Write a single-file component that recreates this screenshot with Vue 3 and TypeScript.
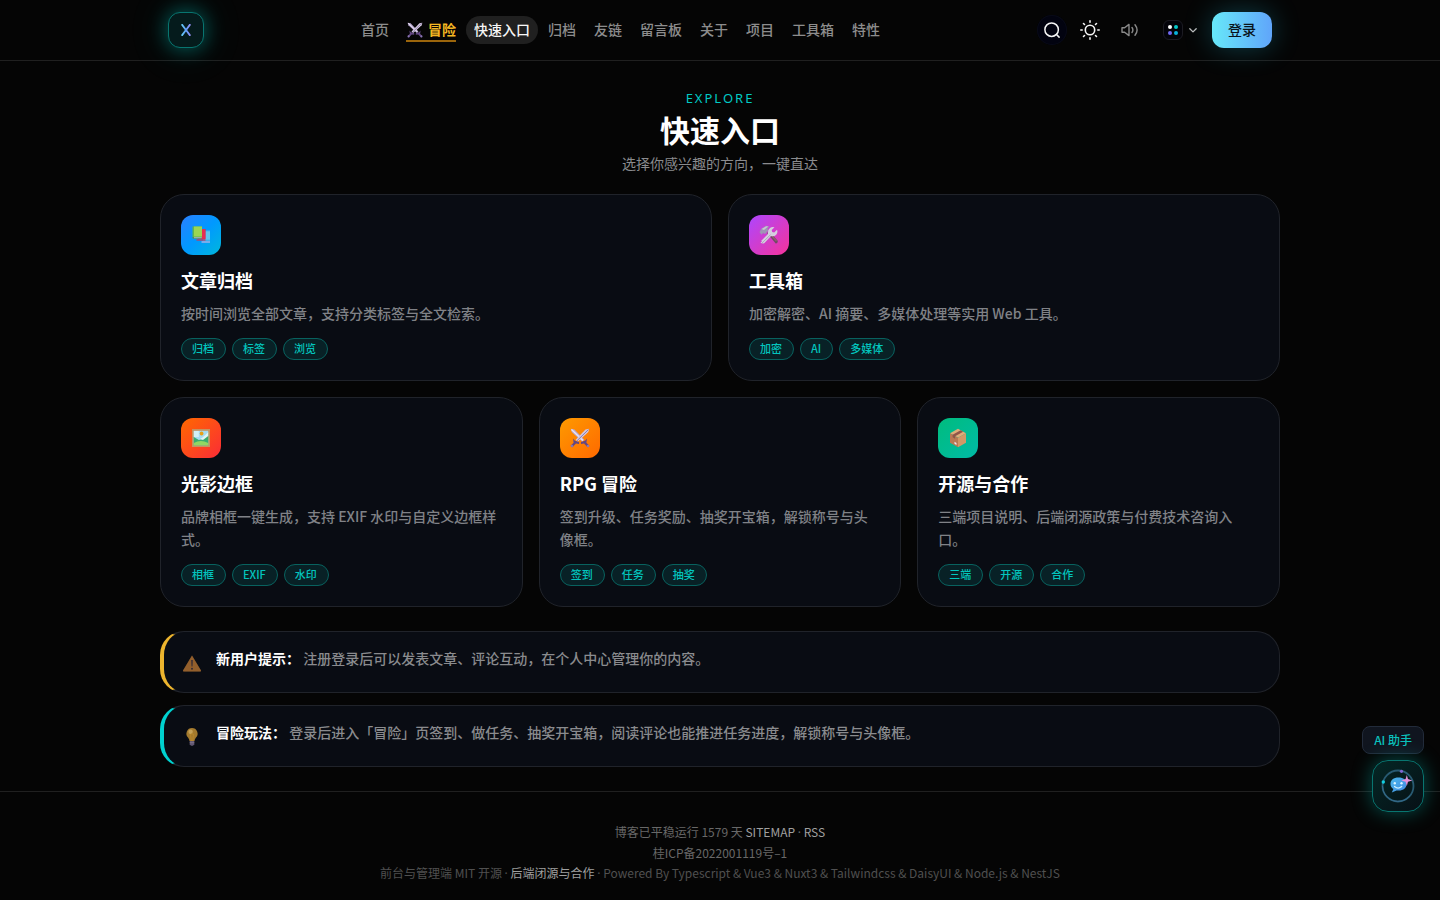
<script setup lang="ts">
type IconName = 'books' | 'tools' | 'frame' | 'swords' | 'box'

interface Entry {
  icon: IconName
  title: string
  desc: string
  tags: string[]
  wide: boolean
}

const navBefore: string[] = ['首页']
const navAfter: string[] = ['归档', '友链', '留言板', '关于', '项目', '工具箱', '特性']

const entries: Entry[] = [
  { icon: 'books', title: '文章归档', desc: '按时间浏览全部文章，支持分类标签与全文检索。', tags: ['归档', '标签', '浏览'], wide: true },
  { icon: 'tools', title: '工具箱', desc: '加密解密、AI 摘要、多媒体处理等实用 Web 工具。', tags: ['加密', 'AI', '多媒体'], wide: true },
  { icon: 'frame', title: '光影边框', desc: '品牌相框一键生成，支持 EXIF 水印与自定义边框样式。', tags: ['相框', 'EXIF', '水印'], wide: false },
  { icon: 'swords', title: 'RPG 冒险', desc: '签到升级、任务奖励、抽奖开宝箱，解锁称号与头像框。', tags: ['签到', '任务', '抽奖'], wide: false },
  { icon: 'box', title: '开源与合作', desc: '三端项目说明、后端闭源政策与付费技术咨询入口。', tags: ['三端', '开源', '合作'], wide: false },
]
</script>

<template>
  <div class="page">
    <header class="topbar">
      <div class="topbar-inner">
        <a class="logo" href="#" aria-label="X">
          <svg viewBox="0 0 12 12" width="12" height="12" fill="none" stroke-width="1.900">
            <defs>
              <linearGradient id="lx" x1="0" y1="0" x2="12" y2="0" gradientUnits="userSpaceOnUse">
                <stop offset="0.1" stop-color="#67d4f8" />
                <stop offset="0.5" stop-color="#609df8" />
                <stop offset="1" stop-color="#a78bfa" />
              </linearGradient>
            </defs>
            <path d="M1.700 .3 10.300 11.700M10.300 .3 1.700 11.700" stroke="url(#lx)" />
          </svg>
        </a>

        <nav class="nav">
          <a v-for="n in navBefore" :key="n" href="#" class="nav-link">{{ n }}</a>
          <a href="#" class="nav-link adventure">
            <svg class="nav-swords" viewBox="0 0 20 20" width="16" height="16"><use href="#swords" /></svg>
            <span>冒险</span>
          </a>
          <a href="#" class="nav-link active">快速入口</a>
          <a v-for="n in navAfter" :key="n" href="#" class="nav-link">{{ n }}</a>
        </nav>

        <div class="actions">
          <button class="round" type="button" aria-label="搜索">
            <svg viewBox="0 0 24 24" width="18" height="18" fill="none" stroke="#f5f5f5" stroke-width="2" stroke-linecap="round"><circle cx="11.500" cy="11.500" r="9" /><path d="m18 18 3.500 3.500" /></svg>
          </button>
          <button class="plain" type="button" aria-label="主题">
            <svg viewBox="0 0 20 20" width="20" height="20" fill="none" stroke="#f5f5f5" stroke-width="1.600" stroke-linecap="round"><circle cx="10" cy="10" r="4.700" /><path d="M10 .8v1.400M10 17.800v1.400M.8 10h1.400M17.800 10h1.400M3.500 3.500l1 1M15.500 15.500l1 1M3.500 16.500l1-1M15.500 4.500l1-1" /></svg>
          </button>
          <button class="plain sound" type="button" aria-label="声音">
            <svg viewBox="0 0 18 14" width="18" height="14" fill="none" stroke="#8a8a8a" stroke-width="1.400" stroke-linecap="round" stroke-linejoin="round"><path d="M1 4.800v4.400h2.600L8 12.600V1.400L3.600 4.800zM11 4.500q1.800 2.500 0 5M14 1.700q4.200 5.300 0 10.600" /></svg>
          </button>
          <button class="palette" type="button" aria-label="配色">
            <span class="swatch"><i></i><i></i><i></i><i></i></span>
            <svg viewBox="0 0 10 10" width="10" height="10" fill="none" stroke="#bcbcbc" stroke-width="1.300" stroke-linecap="round" stroke-linejoin="round"><path d="m1.800 3.700 3.200 3.200 3.200-3.200" /></svg>
          </button>
          <button class="login" type="button">登录</button>
        </div>
      </div>
    </header>

    <main class="main">
      <section class="hero">
        <p class="eyebrow">EXPLORE</p>
        <h1>快速入口</h1>
        <p class="sub">选择你感兴趣的方向，一键直达</p>
      </section>

      <section class="grid">
        <a v-for="e in entries" :key="e.title" href="#" class="card" :class="{ wide: e.wide }">
          <span class="tile" :class="e.icon">
            <svg viewBox="0 0 20 20" width="20" height="20"><use :href="'#' + e.icon" /></svg>
          </span>
          <h2>{{ e.title }}</h2>
          <p class="desc">{{ e.desc }}</p>
          <ul class="tags">
            <li v-for="t in e.tags" :key="t">{{ t }}</li>
          </ul>
        </a>
      </section>

      <section class="notices">
        <div class="notice warn">
          <svg viewBox="0 0 20 20" width="20" height="20"><path d="M10 2.500 19 17.500q.3 1-.8 1H1.800q-1.100 0-.8-1z" fill="#97692f" /><path d="M10 2.500 19 17.500q.3 1-.8 1H1.800q-1.100 0-.8-1z" fill="#8b4c28" opacity=".35" /><path d="M9.200 7h1.600l-.3 6.500h-1z" fill="#342b35" /><circle cx="10" cy="15.700" r="1" fill="#342b35" /></svg>
          <p><strong>新用户提示：</strong> 注册登录后可以发表文章、评论互动，在个人中心管理你的内容。</p>
        </div>
        <div class="notice tip">
          <svg viewBox="0 0 20 20" width="20" height="20"><path d="M10 1a5.600 5.600 0 0 1 4 9.500Q12.600 12 12.500 14h-5Q7.400 12 6 10.500A5.600 5.600 0 0 1 10 1" fill="#a47a2d" /><circle cx="8.600" cy="4.800" r="2.200" fill="#c5a157" /><path d="M8.500 7.500q1.500-1.500 3 0L10.700 14H9.300z" fill="none" stroke="#bc8929" stroke-width=".8" /><path d="M7.700 14h4.600v3.200L11 18.800H9l-1.300-1.600z" fill="#615771" /><path d="M7.700 15.700h4.600" stroke="#897d94" stroke-width=".7" /></svg>
          <p><strong>冒险玩法：</strong> 登录后进入「冒险」页签到、做任务、抽奖开宝箱，阅读评论也能推进任务进度，解锁称号与头像框。</p>
        </div>
      </section>
    </main>

    <footer class="footer">
      <p class="mid">博客已平稳运行 1579 天 <a href="#">SITEMAP</a> <span class="dot">·</span> <a href="#">RSS</a></p>
      <p class="mid">桂ICP备2022001119号–1</p>
      <p>前台与管理端 MIT 开源 <span class="dot">·</span> <a href="#">后端闭源与合作</a> <span class="dot">·</span> Powered By Typescript &amp; Vue3 &amp; Nuxt3 &amp; Tailwindcss &amp; DaisyUI &amp; Node.js &amp; NestJS</p>
    </footer>

    <aside class="assistant">
      <span class="assistant-label">AI 助手</span>
      <button class="assistant-btn" type="button" aria-label="AI 助手">
        <svg viewBox="0 0 36 36" width="36" height="36" fill="none">
          <defs>
            <linearGradient id="bub" x1="10" y1="9" x2="26" y2="24" gradientUnits="userSpaceOnUse"><stop stop-color="#4ab9ed" /><stop offset="1" stop-color="#438be0" /></linearGradient>
          </defs>
          <circle cx="18" cy="18" r="15.500" stroke="#285a72" stroke-width="1.800" />
          <path d="M2.500 18A15.500 15.500 0 0 0 30 27.800" stroke="#356b8b" stroke-width="1" />
          <path d="M18.500 9.500c5 0 8 2.500 8 6.400s-3 6.600-7.700 6.600h-2.300l-4.700 2 1.600-3.600c-2-1.200-2.900-2.900-2.900-5 0-3.900 3-6.400 8-6.400" fill="url(#bub)" />
          <circle cx="14.800" cy="15.300" r="1.200" fill="#d6f3ff" /><circle cx="21.500" cy="15.300" r="1.200" fill="#d6f3ff" />
          <path d="M14.500 18.500q3.600 3.200 7.200 0" stroke="#c9efff" stroke-width="1.200" stroke-linecap="round" />
          <path d="m26.800 7 1.200 4 4.300 1.400-4.300 1.400-1.200 4.200-1.200-4.200-4.300-1.400 4.300-1.400z" fill="#e391d8" />
          <circle cx="21.500" cy="3.300" r="1.600" fill="#8066d2" /><circle cx="3.300" cy="14" r="1.700" fill="#12cfe0" />
        </svg>
      </button>
    </aside>

    <svg class="sprites" aria-hidden="true">
      <symbol id="books" viewBox="0 0 20 20">
        <path d="M12 5.500h7v10.300h-7z" fill="#48b5ed" /><path d="M13 6.500h6v8h-6z" fill="#5fc7f0" />
        <path d="M10.500 16.400h8.500v1.200h-8.500z" fill="#c6b5e6" />
        <path d="M7 4h7.500v10H7z" fill="#cf2757" /><path d="M10.500 4h3.800v9.800h-3.800z" fill="#e62f52" /><path d="M5.500 14.200h9v1.500h-9z" fill="#b64267" />
        <path d="M1.500 1.500H11v10.800H1.500z" fill="#5eb552" /><path d="M3 1.500h8v10H3z" fill="#9bd653" /><path d="M1.500 12h9.300v1.800H2.500q-1 0-1-1z" fill="#4c9160" /><path d="M3 12.300h7.800v.9H3z" fill="#b9bad0" />
      </symbol>
      <symbol id="tools" viewBox="0 0 20 20">
        <path d="m8 8 2-2 8.700 9.700q.5 2.300-2 2.800z" fill="#714c64" /><path d="m10.500 9 1-1 6.500 7.500-1 1z" fill="#90616c" />
        <path d="m.5 7 2-3.500L7 .7l3.500.8-2 2 .7 2L6 9l-2-1-1.500 1.800z" fill="#9f94b5" /><path d="m2.700 4 4.500-2.800 2 .3L5 5z" fill="#cac4d4" />
        <path d="m2 16 7-7Q8.300 5 11 3q2-1.500 4.500-.7L12.700 5l.5 2 2 .5L18 4.700q1.200 3-.8 5-2 2.200-5.200 1.300L5.500 18q-2 1.300-4-.4l1.700-1.400z" fill="#d5cedf" /><path d="m3 18 8.500-8.300" stroke="#a79eb5" stroke-width=".8" />
      </symbol>
      <symbol id="frame" viewBox="0 0 20 20">
        <path d="M1 1h18v18H1z" fill="#c6945f" /><path d="M2.800 2.800h14.400v14.400H2.800z" fill="#a6dcf2" />
        <path d="M2.800 3h5v6h-5z" fill="#d1f1f5" /><circle cx="10.600" cy="5.500" r="1.900" fill="#e9a018" />
        <path d="m2.800 9 5 3 4-1 5.400-5.500v11.700H2.800z" fill="#38ad70" /><path d="m9 11 2.500-1.500 5.700-5.200V8L12 12z" fill="#e2f3f4" /><path d="M2.800 15q7-4 14.400 0v2.200H2.800z" fill="#91d762" />
      </symbol>
      <symbol id="swords" viewBox="0 0 20 20">
        <path d="m.8.8 3.700.8 9.800 10.200-2 2L1.700 4z" fill="#b9a9d2" /><path d="m1.500 1.500 11.500 11" stroke="#eee6f3" stroke-width="1.200" />
        <path d="m19.200.8-3.700.8-9.800 10.200 2 2L18.300 4z" fill="#d4c8e0" /><path d="M18.500 1.500 7 12.800" stroke="#8d7bab" />
        <path d="m3 10.500 2 2.200 4 1.300v2l-3-.5-3.700 3.800-1.700-1.600 3-3zM17 10.500l-2 2.200-4 1.300v2l3-.5 3.700 3.800 1.700-1.600-3-3z" fill="#634783" />
        <circle cx="2" cy="18" r="1.300" fill="#8875b3" /><circle cx="18" cy="18" r="1.300" fill="#8875b3" />
      </symbol>
      <symbol id="box" viewBox="0 0 20 20">
        <path d="m10 .8 8 4.400-8 4.600-8-4.600z" fill="#dfac79" /><path d="M2 5.200 10 9.800v9.400l-8-4.500z" fill="#b97954" /><path d="m18 5.200-8 4.600v9.400l8-4.500z" fill="#d39867" />
        <path d="m12.700 2.300 2.500 1.400-8.100 4.600v2.500L4.600 9.300V6.700z" fill="#8f5649" /><path d="m6.500 13.800 2 1.200v2l-2-1.200z" fill="#eee2ee" />
      </symbol>
    </svg>
  </div>
</template>

<style>
body {
  background: #050505;
}
</style>

<style scoped>
.page {
  display: flex;
  flex-direction: column;
  min-height: 100vh;
  background: #050505;
  color: #8a8b8e;
  font-family: "Noto Sans CJK SC", "Noto Sans", sans-serif;
  font-size: 14px;
  line-height: 23px;
}
h1, h2, p, ul { margin: 0; padding: 0; }
a { color: inherit; text-decoration: none; }
button { font: inherit; color: inherit; border: 0; padding: 0; background: none; cursor: pointer; }
svg { display: block; flex: none; }
.sprites { position: absolute; width: 0; height: 0; }

.topbar { border-bottom: 1px solid #202020; }
.topbar-inner {
  display: flex;
  align-items: center;
  justify-content: space-between;
  box-sizing: border-box;
  max-width: 1120px;
  height: 60px;
  margin: 0 auto;
  padding: 0 8px;
}
.logo {
  display: grid;
  place-items: center;
  box-sizing: border-box;
  width: 36px;
  height: 36px;
  border: 1px solid #087570;
  border-radius: 12px;
  background: #051b1c;
  box-shadow: 0 0 20px rgba(0, 213, 205, 0.42), 0 0 44px rgba(0, 213, 205, 0.16);
}
.nav { display: flex; align-items: center; gap: 2px; }
.nav-link {
  padding: 0 8px 2px;
  border-radius: 14px;
  color: #8d8d8d;
  font-weight: 500;
  line-height: 26px;
  white-space: nowrap;
}
.nav-link.active { background: #202020; color: #f7f7f7; }
.adventure { display: flex; align-items: center; gap: 5px; position: relative; color: #f5b722; font-weight: 700; }
.nav-swords { margin-top: 2px; }
.adventure::after {
  content: "";
  position: absolute;
  left: 7px;
  right: 8px;
  bottom: 2px;
  height: 2px;
  background: #9b650b;
}
.actions { display: flex; align-items: center; gap: 8px; }
.round, .plain { display: grid; place-items: center; width: 30px; height: 30px; border-radius: 50%; }
.round { background: #020310; box-shadow: 0 0 0 1px #080a17 inset; }
.sound { width: 34px; }
.palette { display: flex; align-items: center; gap: 5px; padding: 0 6px 0 8px; }
.swatch {
  display: grid;
  grid-template-columns: 4px 4px;
  gap: 2px;
  place-content: center;
  box-sizing: border-box;
  width: 20px;
  height: 20px;
  border: 1px solid #1b1b22;
  border-radius: 6px;
  background: #030309;
}
.swatch i { width: 4px; height: 4px; border-radius: 50%; background: #fff; }
.swatch i:nth-child(2) { background: #05c9c9; }
.swatch i:nth-child(3) { background: #7169f2; }
.swatch i:nth-child(4) { background: #08b2db; }
.login {
  width: 60px;
  height: 36px;
  padding-bottom: 2px;
  border-radius: 12px;
  background: linear-gradient(90deg, #67e8f9, #60a5fa);
  box-shadow: 0 0 28px rgba(34, 190, 220, 0.3);
  color: #09131c;
  font-weight: 500;
}

.main {
  box-sizing: border-box;
  width: 100%;
  max-width: 1168px;
  margin: 0 auto;
  padding: 27px 24px 24px;
}
.hero { text-align: center; }
.eyebrow { color: #00cbc5; font-family: "Noto Sans", sans-serif; font-size: 13px; line-height: 20px; letter-spacing: 2px; }
.hero h1 { color: #fff; font-size: 30px; font-weight: 700; line-height: 43px; }
.sub { padding-top: 1px; }
.grid { display: grid; grid-template-columns: repeat(6, 1fr); gap: 16px; margin-top: 19px; }
.card {
  grid-column: span 2;
  padding: 20px;
  border: 1px solid #20232a;
  border-radius: 24px;
  background: #090c13;
}
.card.wide { grid-column: span 3; }
.tile { display: grid; place-items: center; width: 40px; height: 40px; border-radius: 12px; }
.tile.books { background: linear-gradient(135deg, #2b7fff, #0099ff 50%, #00b8db); }
.tile.tools { background: linear-gradient(135deg, #ad46ff, #f6339a); }
.tile.frame { background: linear-gradient(135deg, #ff6900, #fb2c36); }
.tile.swords { background: linear-gradient(135deg, #fe9a00, #ff6900); }
.tile.box { background: linear-gradient(135deg, #00bc7d, #00bba7); }
.card h2 { margin-top: 11px; color: #fff; font-size: 18px; font-weight: 700; line-height: 28px; }
.desc { margin-top: 8px; font-weight: 500; color: #808287; }
.tags { display: flex; flex-wrap: wrap; gap: 6px; margin-top: 13px; list-style: none; }
.tags li {
  padding: 0 11px 2px 10px;
  border: 1px solid #08625f;
  border-radius: 11px;
  background: #082126;
  color: #03c5be;
  font-size: 11px;
  font-weight: 500;
  line-height: 18px;
}

.notices { display: grid; gap: 12px; margin-top: 24px; }
.notice {
  display: flex;
  gap: 14px;
  padding: 15px 20px 19px 18px;
  border: 1px solid #20232a;
  border-left: 4px solid #edb52e;
  border-radius: 24px;
  background: #090c13;
  font-weight: 500;
}
.notice.tip { border-left-color: #00d2d0; }
.notice svg { margin-top: 6px; }
.notice strong { color: #fff; font-weight: 700; }

.footer {
  flex: 1;
  padding: 30px 24px 16px;
  border-top: 1px solid #202020;
  color: #505050;
  font-size: 12px;
  line-height: 20px;
  text-align: center;
}
.footer .mid { color: #686868; }
.footer a { color: #a0a0a0; }
.dot { font-family: "Noto Sans", sans-serif; }

.assistant {
  position: fixed;
  right: 16px;
  bottom: 88px;
  display: flex;
  flex-direction: column;
  align-items: flex-end;
  gap: 6px;
}
.assistant-label {
  padding: 0 11px;
  border: 1px solid #222b3a;
  border-radius: 8px;
  background: #10151f;
  color: #0bc2bd;
  font-size: 12px;
  font-weight: 500;
  line-height: 26px;
}
.assistant-btn {
  display: grid;
  place-items: center;
  box-sizing: border-box;
  width: 52px;
  height: 52px;
  border: 1px solid #087570;
  border-radius: 16px;
  background: linear-gradient(135deg, #042725, #071016);
  box-shadow: 0 0 20px rgba(0, 213, 205, 0.36);
}
</style>
